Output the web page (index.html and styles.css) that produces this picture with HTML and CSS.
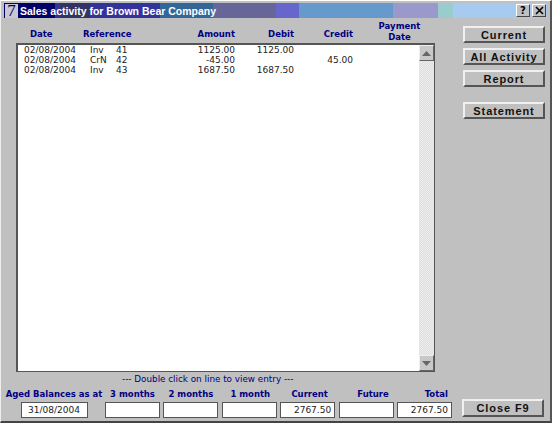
FILE: index.html
```html
<!DOCTYPE html>
<html lang="en">

<head>
  <meta charset="UTF-8">
  <title>Sales activity</title>
  <link rel="stylesheet" href="styles.css">
</head>

<body>
  <div class="window">
    <div class="titlebar">
      <span class="app-icon">7</span>
      <span class="title-text">Sales activity for Brown Bear Company</span>
      <span class="title-btn title-help">?</span>
      <span class="title-btn">
        <svg width="9" height="9" viewBox="0 0 9 9"><path d="M1 1l7 7M8 1l-7 7" stroke="#000" stroke-width="1.6" fill="none"/></svg>
      </span>
    </div>

    <div class="content">
      <div class="main">
        <div class="col-heads">
          <span class="h-date">Date</span>
          <span class="h-ref">Reference</span>
          <span class="h-amount">Amount</span>
          <span class="h-debit">Debit</span>
          <span class="h-credit">Credit</span>
          <span class="h-pay">Payment<br>Date</span>
        </div>

        <div class="list">
          <div class="rows">
            <div class="row">
              <span>02/08/2004</span><span class="r-type">Inv</span><span>41</span>
              <span class="num">1125.00</span><span class="num">1125.00</span><span class="num"></span>
            </div>
            <div class="row">
              <span>02/08/2004</span><span class="r-type">CrN</span><span>42</span>
              <span class="num">-45.00</span><span class="num"></span><span class="num">45.00</span>
            </div>
            <div class="row">
              <span>02/08/2004</span><span class="r-type">Inv</span><span>43</span>
              <span class="num">1687.50</span><span class="num">1687.50</span><span class="num"></span>
            </div>
          </div>
          <div class="scrollbar">
            <div class="scroll-btn"><svg width="9" height="5" viewBox="0 0 9 5"><path d="M4.5 0L9 5H0z" fill="#666"/></svg></div>
            <div class="scroll-track"></div>
            <div class="scroll-btn"><svg width="9" height="5" viewBox="0 0 9 5"><path d="M0 0h9L4.5 5z" fill="#666"/></svg></div>
          </div>
        </div>

        <div class="hint">--- Double click on line to view entry ---</div>

        <div class="balances">
          <div class="bal bal-date"><label>Aged Balances as at</label><div class="field date-field">31/08/2004</div></div>
          <div class="bal"><label>3 months</label><div class="field"></div></div>
          <div class="bal"><label>2 months</label><div class="field"></div></div>
          <div class="bal"><label class="nudge-1">1 month</label><div class="field"></div></div>
          <div class="bal"><label class="nudge-2">Current</label><div class="field">2767.50</div></div>
          <div class="bal"><label class="nudge-3">Future</label><div class="field"></div></div>
          <div class="bal"><label class="right">Total</label><div class="field">2767.50</div></div>
        </div>
      </div>

      <div class="side">
        <button class="btn">Current</button>
        <button class="btn">All Activity</button>
        <button class="btn">Report</button>
        <button class="btn btn-gap">Statement</button>
        <button class="btn btn-close">Close F9</button>
      </div>
    </div>
  </div>
</body>

</html>
```

FILE: styles.css
```css
html, body {
  margin: 0;
  padding: 0;
}

body {
  width: 552px;
  height: 423px;
  overflow: hidden;
  background: #c0c0c0;
  font-family: "DejaVu Sans", sans-serif;
  font-size: 9px;
  color: #222;
}

.window {
  box-sizing: border-box;
  width: 552px;
  height: 423px;
  padding: 2px 3px 0;
  display: flex;
  flex-direction: column;
  border-top: 1px solid #fff;
  border-left: 1px solid #eee;
  border-right: 2px solid #555;
  border-bottom: 2px solid #444;
}

.titlebar {
  height: 15px;
  flex: none;
  display: flex;
  align-items: center;
  padding-right: 1px;
  background: linear-gradient(90deg,
    #000066 0 51px, #333399 51px 56px, #333366 56px 86px, #333399 86px 156px,
    #336699 156px 209px, #666699 209px 272px, #6666cc 272px 295px, #6699cc 295px 389px,
    #9999cc 389px 434px, #99cccc 434px 449px, #a6caf0 449px);
}

.app-icon {
  box-sizing: border-box;
  width: 13px;
  height: 14px;
  margin-left: 1px;
  background: #c8c8d0;
  color: #000066;
  font-family: "Liberation Serif", serif;
  font-size: 17px;
  line-height: 14px;
  text-align: center;
}

.title-text {
  flex: 1;
  margin-left: 2px;
  color: #fff;
  font-family: "Liberation Sans", sans-serif;
  font-weight: bold;
  font-size: 10.5px;
}

.title-btn {
  box-sizing: border-box;
  width: 14px;
  height: 13px;
  display: flex;
  align-items: center;
  justify-content: center;
  background: #c0c0c0;
  border: 1px solid;
  border-color: #fff #444 #444 #fff;
  font-weight: bold;
  font-size: 10px;
  color: #000;
}

.title-help {
  margin-right: 2px;
}

.content {
  flex: 1;
  display: flex;
  min-height: 0;
}

.main {
  width: 456px;
  padding-left: 2px;
  display: flex;
  flex-direction: column;
}

.col-heads {
  height: 25px;
  display: flex;
  align-items: flex-end;
  color: #000080;
  font-size: 8.5px;
  font-weight: bold;
  line-height: 11px;
}

.col-heads span {
  display: block;
  flex: none;
  margin-bottom: 3px;
}

.col-heads .h-pay {
  margin-bottom: 0;
  text-align: center;
}

.h-date { margin-left: 24px; width: 53px; }
.h-ref { width: 60px; }
.h-amount { width: 92px; text-align: right; }
.h-debit { width: 59px; text-align: right; }
.h-credit { width: 59px; text-align: right; }
.h-pay { width: 93px; }

.list {
  box-sizing: border-box;
  width: 419px;
  height: 329px;
  margin-left: 10px;
  display: flex;
  background: #fff;
  border: 1px solid;
  border-width: 2px 1px 1px 2px;
  border-color: #555;
}

.rows {
  flex: 1;
  min-width: 0;
}

.row {
  display: grid;
  grid-template-columns: 60px 32px 30px 89px 59px 59px;
  padding-left: 6px;
  height: 10px;
  line-height: 10px;
}

.r-type {
  padding-left: 6px;
}

.num {
  text-align: right;
}

.scrollbar {
  width: 15px;
  flex: none;
  display: flex;
  flex-direction: column;
}

.scroll-btn {
  height: 16px;
  flex: none;
  display: flex;
  align-items: center;
  justify-content: center;
  box-sizing: border-box;
  background: #c8c8c8;
  border: 1px solid;
  border-color: #eee #666 #666 #eee;
}

.scroll-track {
  flex: 1;
  background: repeating-conic-gradient(#ddd 0 25%, #eee 0 50%) 0 0 / 2px 2px;
}

.hint {
  height: 17px;
  line-height: 14px;
  padding-left: 116px;
  color: #000080;
  font-size: 8.8px;
}

.balances {
  display: flex;
  gap: 3.4px;
  margin-left: 1px;
}

.bal {
  width: 55px;
  display: flex;
  flex-direction: column;
}

.bal label {
  height: 11px;
  line-height: 11px;
  text-align: center;
  font-size: 8.5px;
  font-weight: bold;
  color: #000080;
  white-space: nowrap;
}

.bal label.right {
  text-align: right;
  padding-right: 4px;
}

.bal label.nudge-1 { padding-left: 2px; }
.bal label.nudge-2 { padding-left: 4px; }
.bal label.nudge-3 { padding-left: 14px; }

.bal-date {
  width: 94px;
  margin-right: 0.6px;
  align-items: center;
}

.field {
  box-sizing: border-box;
  height: 16px;
  width: 100%;
  margin-top: 2px;
  padding-right: 3px;
  background: #fff;
  border: 1px solid #555;
  line-height: 14px;
  text-align: right;
}

.date-field {
  width: 67px;
  text-align: center;
  padding: 0;
}

.side {
  flex: 1;
  display: flex;
  flex-direction: column;
  align-items: flex-end;
  gap: 5px;
  padding: 8px 2px 4px 0;
}

.btn {
  box-sizing: border-box;
  width: 82px;
  height: 17px;
  margin: 0;
  padding: 0;
  background: #c0c0c0;
  border: 2px solid;
  border-color: #f0f0f0 #555 #555 #f0f0f0;
  font-family: "Liberation Sans", sans-serif;
  font-weight: bold;
  font-size: 11px;
  letter-spacing: 0.9px;
  color: #111;
}

.btn-gap {
  margin-top: 10px;
}

.btn-close {
  margin-top: auto;
  height: 18px;
  margin-right: 1px;
}
```
